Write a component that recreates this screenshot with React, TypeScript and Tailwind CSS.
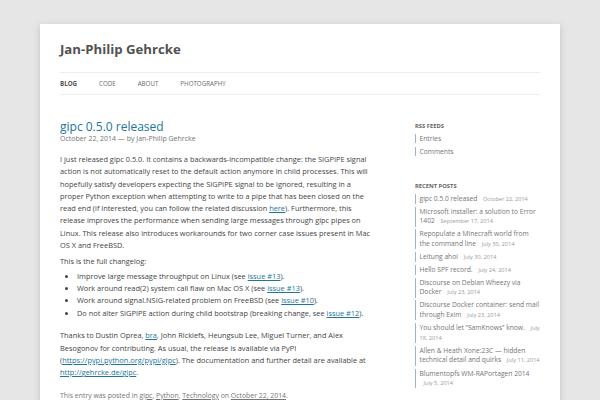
import React from "react";

const font = { fontFamily: '"Open Sans", "DejaVu Sans", sans-serif' };

const recent: [string, string][] = [
  ["gipc 0.5.0 released", "October 22, 2014"],
  ["Microsoft installer: a solution to Error 1402", "September 17, 2014"],
  ["Repopulate a Minecraft world from the command line", "July 30, 2014"],
  ["Leitung ahoi", "July 30, 2014"],
  ["Hello SPF record.", "July 24, 2014"],
  ["Discourse on Debian Wheezy via Docker", "July 23, 2014"],
  ["Discourse Docker container: send mail through Exim", "July 23, 2014"],
  ["You should let \u201cSamKnows\u201d know.", "July 18, 2014"],
  ["Allen & Heath Xone:23C \u2014 hidden technical detail and quirks", "July 11, 2014"],
  ["Blumentopfs WM-RAPortagen 2014", "July 5, 2014"],
];

function L({ children }: { children: React.ReactNode }) {
  return <a className="text-[#21759b] underline">{children}</a>;
}

export default function App() {
  return (
    <div className="h-[400px] w-[600px] overflow-hidden bg-[#e6e6e6] pt-[24px] pl-[40px]" style={font}>
      <div className="w-[520px] min-h-[400px] bg-white px-[20px] pt-[17px] shadow-[0_2px_6px_rgba(100,100,100,0.3)]">
        <header>
          <h1 className="text-[13.2px] leading-[16px] font-bold text-[#515151]">Jan-Philip Gehrcke</h1>
          <nav className="mt-[15px] flex h-[23px] items-center border-y border-[#ededed] text-[6.2px] uppercase text-[#6a6a6a]">
            <span className="mr-[22px] font-bold text-[#555]">Blog</span>
            <span className="mr-[22px]">Code</span>
            <span className="mr-[22px]">About</span>
            <span>Photography</span>
          </nav>
        </header>
        <div className="mt-[24px] flex justify-between">
          <main className="w-[313px] text-[#444]">
            <h2 className="text-[12px] leading-[15px] text-[#21759b]">gipc 0.5.0 released</h2>
            <div className="text-[7px] leading-[10px] text-[#757575]">October 22, 2014 — by Jan-Philip Gehrcke</div>
            <div className="mt-[9px] w-[312px] text-[7.4px] leading-[12.3px]">
              <p className="mb-[3.5px]">
                I just released gipc 0.5.0. It contains a backwards-incompatible change: the SIGPIPE signal action is not
                automatically reset to the default action anymore in child processes. This will hopefully satisfy developers
                expecting the SIGPIPE signal to be ignored, resulting in a proper Python exception when attempting to write to
                a pipe that has been closed on the read end (if interested, you can follow the related discussion <L>here</L>).
                Furthermore, this release improves the performance when sending large messages through gipc pipes on Linux.
                This release also introduces workarounds for two corner case issues present in Mac OS X and FreeBSD.
              </p>
              <p className="mb-[2.5px]">This is the full changelog:</p>
              <ul className="mb-[10.5px] list-disc pl-[17px]">
                <li>Improve large message throughput on Linux (see <L>issue #13</L>).</li>
                <li>Work around read(2) system call flaw on Mac OS X (see <L>issue #13</L>).</li>
                <li>Work around signal.NSIG-related problem on FreeBSD (see <L>issue #10</L>).</li>
                <li>Do not alter SIGPIPE action during child bootstrap (breaking change, see <L>issue #12</L>).</li>
              </ul>
              <p>
                Thanks to Dustin Oprea, <L>bra</L>, John Ricklefs, Heungsub Lee, Miguel Turner, and Alex Besogonov for
                contributing. As usual, the release is available via PyPI (<L>https://pypi.python.org/pypi/gipc</L>). The
                documentation and further detail are available at <L>http://gehrcke.de/gipc</L>.
              </p>
            </div>
            <div className="mt-[12px] text-[6.9px] leading-[10px] text-[#757575]">
              This entry was posted in <a className="underline">gipc</a>, <a className="underline">Python</a>,{" "}
              <a className="underline">Technology</a> on <a className="underline">October 22, 2014</a>.
            </div>
          </main>
          <aside className="w-[125px] pt-[3px] text-[#757575]">
            <h3 className="text-[5.8px] leading-[8px] font-bold uppercase text-[#636363]">RSS Feeds</h3>
            <ul className="mt-[4px] text-[6.7px] leading-[9.3px]">
              <li className="mb-[3.3px] border-l-[1.5px] border-[#9db3cf] pl-[3.5px]">Entries</li>
              <li className="mb-[3.3px] border-l-[1.5px] border-[#9db3cf] pl-[3.5px]">Comments</li>
            </ul>
            <h3 className="mt-[26px] text-[5.8px] leading-[8px] font-bold uppercase text-[#636363]">Recent Posts</h3>
            <ul className="mt-[4px] text-[6.7px] leading-[9.3px]">
              {recent.map(([t, d]) => (
                <li key={t} className="mb-[2.8px] border-l-[1.5px] border-[#9db3cf] pl-[3.5px]">
                  {t} <span className="ml-[4px] text-[5.6px] text-[#9a9a9a]">{d}</span>
                </li>
              ))}
            </ul>
          </aside>
        </div>
      </div>
    </div>
  );
}
